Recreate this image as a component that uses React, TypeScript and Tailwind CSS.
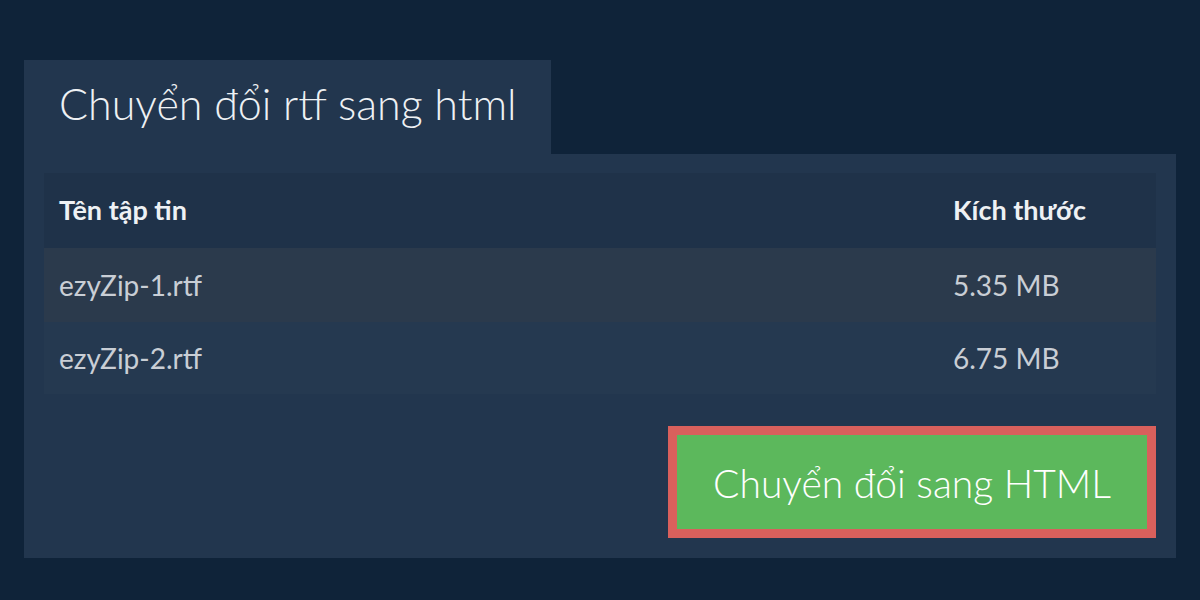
import React from "react";

const files = [
  { name: "ezyZip-1.rtf", size: "5.35 MB" },
  { name: "ezyZip-2.rtf", size: "6.75 MB" },
];

const App: React.FC = () => {
  return (
    <div
      className="w-[1200px] h-[600px] bg-[#0f2339] pt-[60px] px-[24px]"
      style={{ fontFamily: "Lato, 'Noto Sans', sans-serif" }}
    >
      {/* Tab header */}
      <div className="w-[527px] h-[94px] bg-[#22364e] flex items-center pl-[35px] pb-[8px]">
        <h1 className="text-[43px] font-light text-[#eef1f4] leading-none">
          Chuyển đổi rtf sang html
        </h1>
      </div>

      {/* Panel */}
      <div className="bg-[#22364e] pt-[19px] px-[20px] pb-[20px]">
        <table className="w-full border-collapse text-[28px]">
          <thead>
            <tr className="bg-[#1f3249] h-[75px]">
              <th className="text-left font-bold text-[#eef1f4] pl-[15px] text-[27px]">Tên tập tin</th>
              <th className="text-left font-bold text-[#eef1f4] w-[203px] text-[27px]">Kích thước</th>
            </tr>
          </thead>
          <tbody>
            {files.map((f, i) => (
              <tr
                key={i}
                className={i % 2 === 0 ? "bg-[#2b3a4c] h-[74px]" : "bg-[#253950] h-[72px]"}
              >
                <td className="pl-[15px] text-[#c9ced5]">{f.name}</td>
                <td className="text-[#c9ced5]">{f.size}</td>
              </tr>
            ))}
          </tbody>
        </table>

        <div className="flex justify-end mt-[32px]">
          <button className="w-[488px] h-[112px] bg-[#5cb85c] border-[9px] border-[#d9605c] text-white text-[39px] font-light pt-[2px]">
            Chuyển đổi sang HTML
          </button>
        </div>
      </div>
    </div>
  );
};

export default App;
